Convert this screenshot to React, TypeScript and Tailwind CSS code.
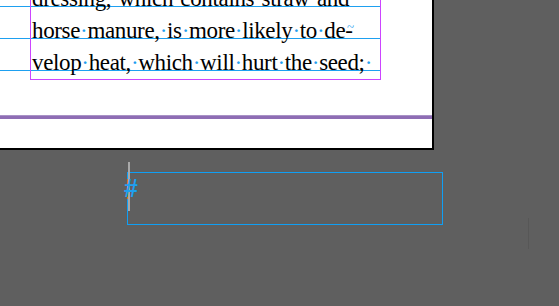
import React from 'react'

const lines = [
  { words: ['dressing,', 'which', 'contains', 'straw', 'and'], end: 'dot' },
  { words: ['horse', 'manure,', 'is', 'more', 'likely', 'to', 'de-'], end: 'tilde' },
  { words: ['velop', 'heat,', 'which', 'will', 'hurt', 'the', 'seed;'], end: 'dot' },
]

function Line({ words, end }: { words: string[]; end: string }) {
  return (
    <div className="relative whitespace-nowrap">
      {words.map((w, i) => (
        <React.Fragment key={i}>
          {i > 0 && <span className="text-[#1ea0f0]">·</span>}
          {w}
        </React.Fragment>
      ))}
      {end === 'dot' && <span className="text-[#1ea0f0]">·</span>}
      {end === 'tilde' && (
        <span className="absolute left-[315px] top-[5px] text-[13px] leading-none text-[#1ea0f0]">~</span>
      )}
    </div>
  )
}

export default function App() {
  return (
    <div className="relative w-[559px] h-[306px] overflow-hidden bg-[#5f5f5f]">
      {/* page */}
      <div className="relative w-[434px] h-[150px] bg-white border-r-2 border-b-2 border-black">
        {/* baseline grid */}
        <div className="flex flex-col gap-[31px] pt-[6px] w-[381px]">
          <div className="h-px bg-[#1ea0f0]" />
          <div className="h-px bg-[#1ea0f0]" />
          <div className="h-px bg-[#1ea0f0]" />
        </div>

        {/* text frame */}
        <div className="absolute left-[30px] top-0 w-[351px] h-[80px] border-l border-r border-b border-[#cc44ff] overflow-hidden">
          <div className="-mt-[17px] pl-px font-['Liberation_Serif',serif] text-[23px] tracking-[-0.35px] leading-[32px] text-black">
            {lines.map((l, i) => (
              <Line key={i} words={l.words} end={l.end} />
            ))}
          </div>
        </div>

        {/* margin line */}
        <div className="mt-[44px] w-[432px] h-[4px] bg-[#8e6db4] border-t border-[#a892c6]" />
      </div>

      {/* empty frame on pasteboard */}
      <div className="absolute left-[127px] top-[172px] w-[316px] h-[53px] border border-[#0f9ff5]" />
      <div className="absolute left-[128px] top-[162px] w-[2px] h-[49px] bg-[#a9a9a9]" />
      <div className="absolute left-[127px] top-[179px] w-px h-[20px] bg-[#d9731a]" />
      <span className="absolute left-[124px] top-[173px] font-['Liberation_Sans',sans-serif] font-bold text-[25px] leading-[30px] text-[#1ea0f0]">#</span>

      {/* faint guide */}
      <div className="absolute left-[528px] top-[218px] w-px h-[31px] bg-[#575757]" />
    </div>
  )
}
